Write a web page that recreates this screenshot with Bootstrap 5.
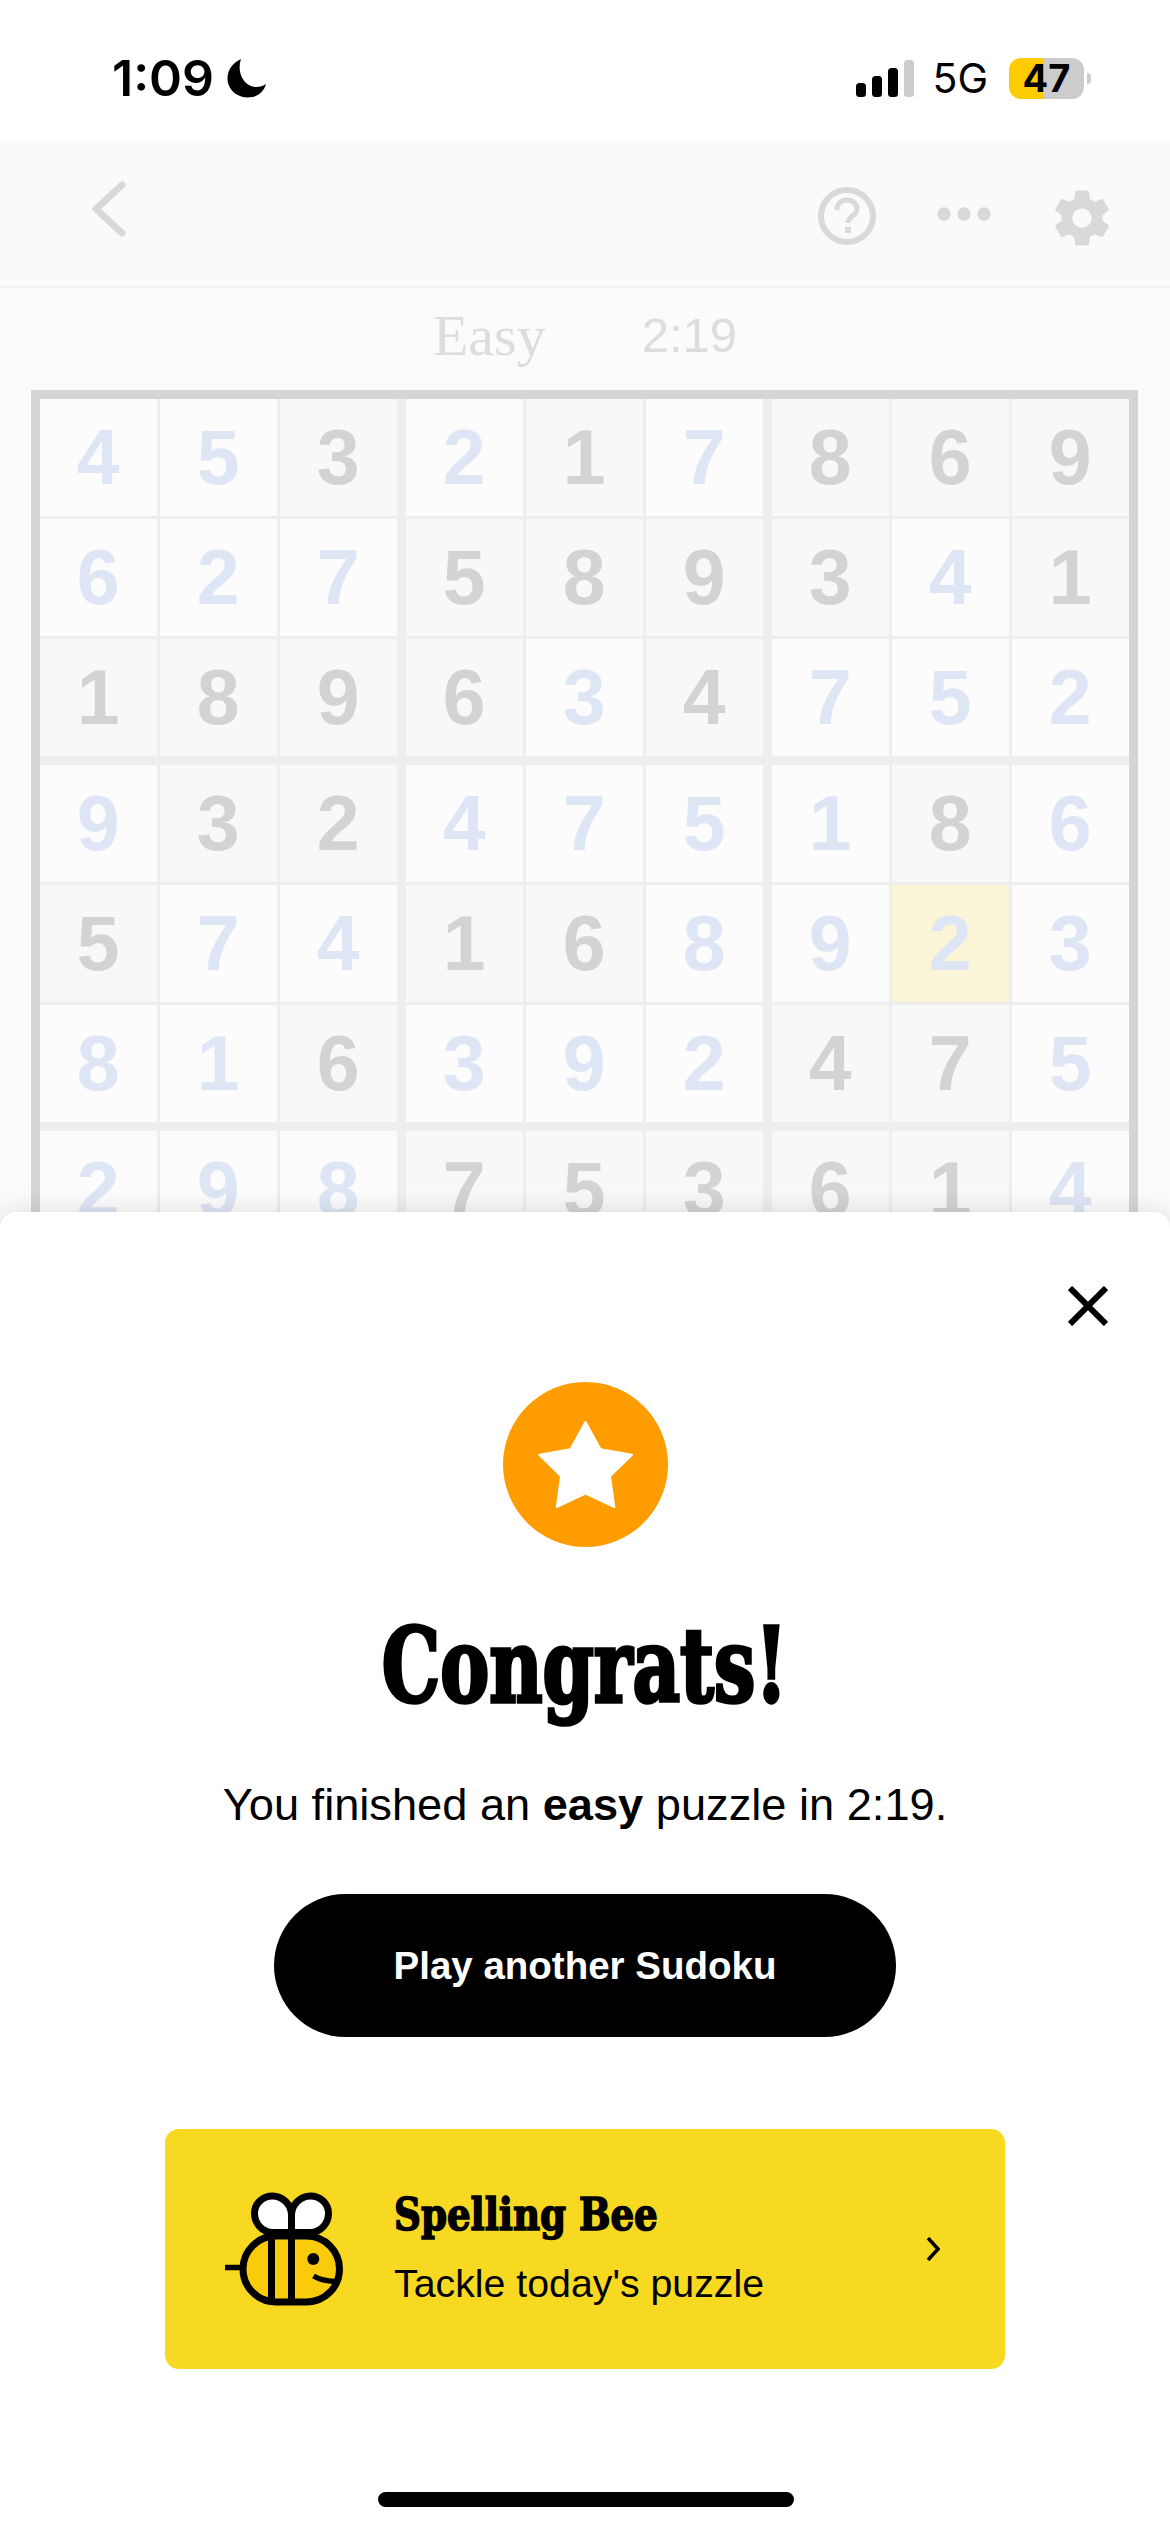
<!DOCTYPE html>
<html lang="en">
<head>
  <meta charset="UTF-8">
  <title>Sudoku - Congrats</title>
  <link href="https://cdn.jsdelivr.net/npm/bootstrap@5.3.0/dist/css/bootstrap.min.css" rel="stylesheet">
  <style>
    body { background: #fff; margin: 0; }
    .screen { width: 1170px; height: 2532px; overflow: hidden; background: #fbfbfb; font-family: "Liberation Sans", sans-serif; color: #000; }

    .status-bar { height: 141px; background: #fff; padding: 15px 79px 0 112px; font-family: Inter, sans-serif; }
    .clock { font-size: 50px; font-weight: 600; line-height: 1; }
    .net-label { font-size: 41px; line-height: 1; margin: 0 21px 0 18px; }
    .battery { width: 75px; height: 41px; border-radius: 12px; background: linear-gradient(90deg, #ffcc00 35px, #cccccc 35px); font-size: 38px; font-weight: 700; line-height: 41px; text-align: center; }
    .battery-nub { width: 4px; height: 11px; margin-left: 3px; background: #ccc; border-radius: 0 6px 6px 0; }

    .top-bar { height: 147px; background: #fafafa; border-bottom: 3px solid #f4f4f4; padding: 6px 55px 0 88px; }
    .back-arrow { margin-top: -15px; }
    .top-tools { gap: 60px; }
    .tool-gear { margin-left: -2px; margin-top: 3px; }

    .game-info { height: 102px; gap: 96px; color: #dddddd; padding-bottom: 7px; }
    .level { font-family: "Liberation Serif", serif; font-size: 58px; line-height: 1; }
    .timer { font-size: 49px; line-height: 1; }

    .board { margin-left: 31px; width: 1107px; height: 900px; border: 9.5px solid #d5d5d5; border-bottom: 0; background: #eeeeee; gap: 3px; }
    .board-row { gap: 3.5px; }
    .row-start { margin-top: 6px; }
    .board-cell { flex: 0 0 116.5px; height: 117px; font-size: 77px; font-weight: 700; line-height: 1; background: #fcfcfc; color: #dee5f4; }
    .board-cell.given { background: #f8f8f8; color: #d3d3d3; }
    .board-cell.active { background: #fbf5d8; }
    .board-cell.box-start { margin-left: 6px; }

    .sheet { top: 1212px; left: 0; right: 0; bottom: 0; background: #fff; border-radius: 16px 16px 0 0; box-shadow: 0 0 26px rgba(0,0,0,.13); }
    .close-row { padding: 74px 62px 0 0; }
    .close-btn { background: none; border: 0; padding: 0; line-height: 0; }
    .star-badge { width: 165px; height: 165px; margin-top: 56px; background: #ff9c00; }
    .congrats { font-family: "DejaVu Serif Condensed", "DejaVu Serif", serif; font-weight: 700; font-size: 102px; line-height: 1; margin: 68px 0 0; -webkit-text-stroke: 3.5px #000; transform: scaleX(.8); }
    .result-text { font-size: 45.2px; line-height: 1; margin: 65px 0 0; }
    .play-btn { width: 622px; height: 143px; margin-top: 67px; font-size: 38.5px; font-weight: 700; background: #000; border: 0; color: #fff; }
    .promo { width: 840px; height: 240px; margin-top: 92px; background: #f8d922; border: 0; border-radius: 14px; padding-left: 60px; padding-right: 65px; }
    .promo-title { font-family: "DejaVu Serif Condensed", "DejaVu Serif", serif; font-weight: 700; font-size: 44px; line-height: 1; -webkit-text-stroke: 1.5px #000; transform: scaleX(.94); transform-origin: left center; }
    .promo-sub { font-size: 39.3px; line-height: 1; margin-top: 27px; }
    .promo-text { margin-left: 51px; margin-bottom: 3px; }
    .home-bar { left: 378px; bottom: 25px; width: 416px; height: 15px; background: #000; }
  </style>
</head>
<body>

  <div class="screen position-relative">

    <div class="status-bar d-flex align-items-center justify-content-between">
      <div class="d-flex align-items-center gap-2">
        <span class="clock">1:09</span>
        <svg width="42" height="42" viewBox="0 0 42 42" class="ms-1"><path d="M15 2 C4 7 0 17 2 26 C5 37 16 42 26 40 C33 39 38 34 40 27 C36 30 30 31 25 29 C16 26 11 13 15 2 Z" fill="#000"/></svg>
      </div>
      <div class="d-flex align-items-center">
        <svg width="58" height="37" viewBox="0 0 58 37">
          <rect x="0" y="23" width="10" height="14" rx="3.5" fill="#000"/>
          <rect x="16" y="16" width="10" height="21" rx="3.5" fill="#000"/>
          <rect x="32" y="8" width="10" height="29" rx="3.5" fill="#000"/>
          <rect x="48" y="0" width="10" height="37" rx="3.5" fill="#ccc"/>
        </svg>
        <span class="net-label">5G</span>
        <div class="battery">47</div>
        <div class="battery-nub"></div>
      </div>
    </div>

    <div class="top-bar d-flex align-items-center justify-content-between">
      <svg class="back-arrow" width="42" height="60" viewBox="0 0 42 60"><path d="M34 6 L8 30 L34 54" fill="none" stroke="#d8d8d8" stroke-width="7" stroke-linecap="round" stroke-linejoin="round"/></svg>
      <div class="top-tools d-flex align-items-center">
        <svg width="60" height="60" viewBox="0 0 60 60">
          <circle cx="30" cy="30" r="26" fill="none" stroke="#d9d9d9" stroke-width="6"/>
          <path d="M20 24 C20 17 25 14 30 14 C36 14 40 18 40 23 C40 30 31 30 31 37" fill="none" stroke="#d9d9d9" stroke-width="5"/>
          <rect x="28" y="41" width="6" height="6" fill="#d9d9d9"/>
        </svg>
        <svg width="54" height="16" viewBox="0 0 54 16" class="mb-1">
          <circle cx="7" cy="8" r="6.7" fill="#d9d9d9"/><circle cx="27" cy="8" r="6.7" fill="#d9d9d9"/><circle cx="47" cy="8" r="6.7" fill="#d9d9d9"/>
        </svg>
        <svg class="tool-gear" width="66" height="66" viewBox="0 0 24 24"><path fill="#d9d9d9" d="M19.43 12.98c.04-.32.07-.64.07-.98s-.03-.66-.07-.98l2.11-1.65c.19-.15.24-.42.12-.64l-2-3.46c-.12-.22-.39-.3-.61-.22l-2.49 1c-.52-.4-1.08-.73-1.69-.98l-.38-2.65C14.46 2.18 14.25 2 14 2h-4c-.25 0-.46.18-.49.42l-.38 2.65c-.61.25-1.17.59-1.69.98l-2.49-1c-.23-.09-.49 0-.61.22l-2 3.46c-.13.22-.07.49.12.64l2.11 1.65c-.04.32-.07.65-.07.98s.03.66.07.98l-2.11 1.65c-.19.15-.24.42-.12.64l2 3.46c.12.22.39.3.61.22l2.49-1c.52.4 1.08.73 1.69.98l.38 2.65c.03.24.24.42.49.42h4c.25 0 .46-.18.49-.42l.38-2.65c.61-.25 1.17-.59 1.69-.98l2.49 1c.23.09.49 0 .61-.22l2-3.46c.12-.22.07-.49-.12-.64l-2.01-1.65zM12 15.5c-1.93 0-3.5-1.57-3.5-3.5s1.57-3.5 3.5-3.5 3.5 1.57 3.5 3.5-1.57 3.5-3.5 3.5z"/></svg>
      </div>
    </div>

    <div class="game-info d-flex align-items-center justify-content-center">
      <span class="level">Easy</span>
      <span class="timer">2:19</span>
    </div>

    <div class="board d-flex flex-column" id="board"></div>

    <!-- Sheet over the board -->
    <div class="sheet position-absolute d-flex flex-column align-items-center">
      <div class="close-row d-flex justify-content-end w-100">
        <button class="close-btn" type="button" aria-label="Close">
          <svg width="40" height="40" viewBox="0 0 40 40"><path d="M2 2 L38 38 M38 2 L2 38" stroke="#000" stroke-width="6" fill="none"/></svg>
        </button>
      </div>
      <div class="star-badge rounded-circle">
        <svg width="165" height="165" viewBox="0 0 165 165"><polygon points="82.5,40 97.5,67.3 129,72.7 107,94.3 111.3,125 82.5,111.7 53.8,125 58,94.3 36.3,72.7 67.5,67.3" fill="#fff" stroke="#fff" stroke-width="2" stroke-linejoin="round"/></svg>
      </div>
      <h1 class="congrats">Congrats!</h1>
      <p class="result-text">You finished an <b>easy</b> puzzle in 2:19.</p>
      <button class="btn play-btn rounded-pill" type="button">Play another Sudoku</button>

      <div class="promo card flex-row align-items-center">
        <svg width="118" height="114" viewBox="25 33 118 114" class="flex-shrink-0">
          <path d="M25 108.5 H43" stroke="#000" stroke-width="5.5"/>
          <rect x="43" y="77" width="96.5" height="66" rx="33" fill="#f9cb0b" stroke="#000" stroke-width="7"/>
          <path d="M71.5 77 V143 M91.5 77 V143" stroke="#000" stroke-width="7"/>
          <path d="M91.5 73.5 H73 C62 73.5 54.5 64 54.5 54.5 C54.5 44 63 37 72.5 37 C83 37 91.5 46 91.5 56 Z" fill="#fff" stroke="#000" stroke-width="7"/>
          <path d="M91.5 73.5 H110 C121 73.5 128.5 64 128.5 54.5 C128.5 44 120 37 110.5 37 C100 37 91.5 46 91.5 56 Z" fill="#fff" stroke="#000" stroke-width="7"/>
          <circle cx="113.3" cy="100" r="6" fill="#000"/>
          <path d="M113.5 117 Q122 122 135 122.5" fill="none" stroke="#000" stroke-width="5.5"/>
        </svg>
        <div class="promo-text flex-grow-1">
          <div class="promo-title">Spelling Bee</div>
          <div class="promo-sub">Tackle today's puzzle</div>
        </div>
        <svg width="14" height="24" viewBox="0 0 14 24"><path d="M2 1 L12 12 L2 23" fill="none" stroke="#000" stroke-width="3.5"/></svg>
      </div>
      <div class="home-bar position-absolute rounded-pill"></div>
    </div>
  </div>

  <script src="https://cdn.jsdelivr.net/npm/bootstrap@5.3.0/dist/js/bootstrap.bundle.min.js"></script>
  <script>
    // g = given digit (grey), a = last cell played, anything else is blue
    const linhas = [
      ["4", "5", "3g", "2", "1g", "7", "8g", "6g", "9g"],
      ["6", "2", "7", "5g", "8g", "9g", "3g", "4", "1g"],
      ["1g", "8g", "9g", "6g", "3", "4g", "7", "5", "2"],
      ["9", "3g", "2g", "4", "7", "5", "1", "8g", "6"],
      ["5g", "7", "4", "1g", "6g", "8", "9", "2a", "3"],
      ["8", "1", "6g", "3", "9", "2", "4g", "7g", "5"],
      ["2", "9", "8", "7g", "5g", "3g", "6g", "1g", "4"]
    ];

    const tabuleiro = document.getElementById("board");

    linhas.forEach((linha, r) => {
      const fila = document.createElement("div");
      fila.className = "board-row d-flex";
      if (r === 3 || r === 6) fila.classList.add("row-start");

      linha.forEach((valor, c) => {
        const cel = document.createElement("div");
        cel.className = "board-cell d-flex align-items-center justify-content-center";
        cel.textContent = valor[0];
        if (valor[1] === "g") cel.classList.add("given");
        if (valor[1] === "a") cel.classList.add("active");
        if (c === 3 || c === 6) cel.classList.add("box-start");
        fila.appendChild(cel);
      });

      tabuleiro.appendChild(fila);
    });
  </script>
</body>
</html>
